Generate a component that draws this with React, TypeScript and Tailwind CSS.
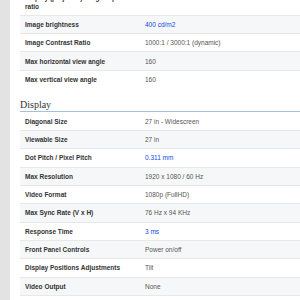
import React from "react";

type Row = { label: string; value: string; link?: boolean };

const top: Row[] = [
  { label: "Display (projector) image aspect ratio", value: "16:9", link: true },
  { label: "Image brightness", value: "400 cd/m2", link: true },
  { label: "Image Contrast Ratio", value: "1000:1 / 3000:1 (dynamic)" },
  { label: "Max horizontal view angle", value: "160" },
  { label: "Max vertical view angle", value: "160" },
];

const display: Row[] = [
  { label: "Diagonal Size", value: "27 in - Widescreen" },
  { label: "Viewable Size", value: "27 in" },
  { label: "Dot Pitch / Pixel Pitch", value: "0.311 mm", link: true },
  { label: "Max Resolution", value: "1920 x 1080 / 60 Hz" },
  { label: "Video Format", value: "1080p (FullHD)" },
  { label: "Max Sync Rate (V x H)", value: "76 Hz x 94 KHz" },
  { label: "Response Time", value: "3 ms", link: true },
  { label: "Front Panel Controls", value: "Power on/off" },
  { label: "Display Positions Adjustments", value: "Tilt" },
  { label: "Video Output", value: "None" },
  { label: "", value: "" },
];

function Value({ r }: { r: Row }) {
  if (r.link) {
    return <a className="text-blue-700">{r.value}</a>;
  }
  return <span className="text-[#555555]">{r.value}</span>;
}

function Table({ rows }: { rows: Row[] }) {
  return (
    <div>
      {rows.map((r, i) => (
        <div
          key={i}
          className={
            "flex items-start pl-[5px] pb-[3.72px] text-[6.5px] leading-[8.5px] " +
            (i > 0 ? "border-t border-[#e8e8e8] pt-[5.12px] " : "pt-[6.12px] ") +
            (i % 2 === 1 ? "bg-[#f6f7f9]" : "bg-white")
          }
        >
          <div className="w-[120px] shrink-0 pr-[10px] font-bold text-[#333333]">{r.label}</div>
          <div>
            <Value r={r} />
          </div>
        </div>
      ))}
    </div>
  );
}

export default function App() {
  return (
    <div
      className="w-[300px] h-[300px] overflow-hidden bg-white border-l-[10px] border-[#e3e3e3] pl-[10px]"
      style={{ fontFamily: '"Liberation Sans", Arial, sans-serif' }}
    >
      <div className="-mt-[12px]">
        <Table rows={top} />
        <div className="pt-[12px] border-b-[1.5px] border-[#a3c0dc]">
          <div
            className="text-[10px] leading-[10px] text-[#333333] pb-[0.5px]"
            style={{ fontFamily: '"Liberation Serif", "Times New Roman", serif' }}
          >
            Display
          </div>
        </div>
        <Table rows={display} />
      </div>
    </div>
  );
}
